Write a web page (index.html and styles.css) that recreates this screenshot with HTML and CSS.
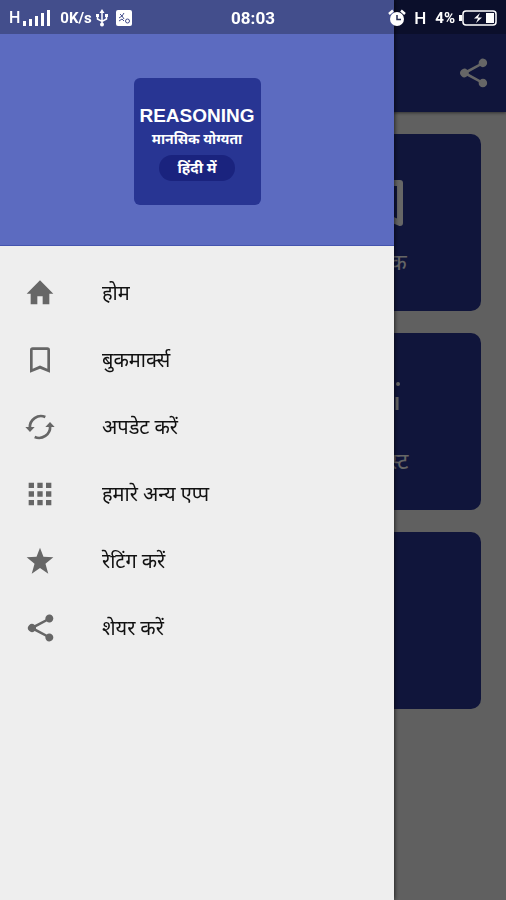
FILE: index.html
```html
<!DOCTYPE html>
<html lang="hi">
<head>
    <meta charset="UTF-8">
    <meta name="viewport" content="width=device-width, initial-scale=1">
    <title>Reasoning</title>
    <link rel="stylesheet" href="styles.css">
</head>
<body>
<main class="page">
    <header class="toolbar">
        <button type="button" class="icon-btn" aria-label="शेयर करें">
            <svg class="icon-share" viewBox="0 0 24 24"><path d="M19 16.100c-.8 0-1.500.3-2 .8l-8-4.400v-1l8-4.400A3 3 0 1 0 16 5v.7L8 9.800a3 3 0 1 0 0 4.400l8 4.100v.7a3 3 0 1 0 3-2.900z"/></svg>
        </button>
    </header>
    <div class="cards">
        <div class="card"></div>
        <div class="card">
            <svg class="card-icon" viewBox="0 0 64 60"><path d="M30 9h29v40l-14-6-15 6z" fill="none" stroke="currentColor" stroke-width="6" stroke-linejoin="round"/></svg>
            <span>मानसिक</span>
        </div>
        <div class="card"></div>
        <div class="card">
            <svg class="card-icon" viewBox="0 0 64 60"><path d="M10 12h36M56 24v13M10 34h36v16H10z" fill="none" stroke="currentColor" stroke-width="3"/><circle cx="57" cy="11" r="2"/></svg>
            <span>मॉक टेस्ट</span>
        </div>
        <div class="card"></div>
        <div class="card"></div>
    </div>
</main>
<div class="scrim"></div>

<aside class="drawer">
    <div class="drawer-header">
        <div class="logo">
            <strong class="logo-title">REASONING</strong>
            <span class="logo-sub">मानसिक योग्यता</span>
            <span class="logo-pill">हिंदी में</span>
        </div>
    </div>
    <nav class="menu">
        <a href="#" class="menu-item">
            <svg viewBox="0 0 24 24"><path d="M10 20.500v-6h4v6h5v-8h3L12 2.500 2 12.500h3v8z"/></svg>
            <span>होम</span>
        </a>
        <a href="#" class="menu-item">
            <svg viewBox="0 0 24 24"><path d="M17.500 2.500h-11a2 2 0 0 0-2 2v17l7.500-3 7.500 3v-17a2 2 0 0 0-2-2zm0 16L12 16.200l-5.500 2.300v-14h11z"/></svg>
            <span>बुकमार्क्स</span>
        </a>
        <a href="#" class="menu-item">
            <svg viewBox="0 0 24 24"><g fill="none" stroke="currentColor" stroke-width="2"><path d="M16 4.500A8.300 8.300 0 0 0 4.400 12.500"/><path d="M8 19.500A8.300 8.300 0 0 0 19.600 11.500"/></g><path d="M1 12h7l-3.500 3.800zM16 12h7l-3.500-3.800z"/></svg>
            <span>अपडेट करें</span>
        </a>
        <a href="#" class="menu-item">
            <svg viewBox="0 0 24 24"><path d="M3.500 3.500h4v4h-4zm6.500 0h4v4h-4zm6.500 0h4v4h-4zM3.500 10h4v4h-4zm6.500 0h4v4h-4zm6.500 0h4v4h-4zM3.500 16.500h4v4h-4zm6.500 0h4v4h-4zm6.500 0h4v4h-4z"/></svg>
            <span>हमारे अन्य एप्प</span>
        </a>
        <a href="#" class="menu-item">
            <svg viewBox="0 0 24 24"><path d="M12 17.300l6.200 4.200-2.100-7.500 5.900-4.800-7.400-.3L12 2 9.400 8.900 2 9.200 7.900 14l-2.100 7.500z"/></svg>
            <span>रेटिंग करें</span>
        </a>
        <a href="#" class="menu-item">
            <svg viewBox="0 0 24 24"><path d="M19 16.100c-.8 0-1.500.3-2 .8l-8-4.400v-1l8-4.400A3 3 0 1 0 16 5v.7L8 9.800a3 3 0 1 0 0 4.400l8 4.100v.7a3 3 0 1 0 3-2.900z"/></svg>
            <span>शेयर करें</span>
        </a>
    </nav>
</aside>

<div class="statusbar">
    <div class="status-left">
        <span class="sim">H</span>
        <svg class="signal" viewBox="0 0 28 16"><path d="M0 11h3v5H0zM6 9h3v7H6zM12 6h3v10h-3zM18 3h3v13h-3zM24 0h3v16h-3z"/></svg>
        <span class="speed">0K/s</span>
        <svg class="usb" viewBox="0 0 12 18"><path d="M6 2v13M1.500 6v4L6 12.500 10.500 10V6" fill="none" stroke="currentColor" stroke-width="1.500"/><path d="M6 0l2.500 4h-5zM0 5h3v3H0zM9 5h3v3H9z"/><circle cx="6" cy="15.500" r="2"/></svg>
        <svg class="app" viewBox="0 0 16 16"><rect width="16" height="16" rx="2"/><g fill="none" stroke="#434d8b"><path d="M3 8l3-2M4 4l2 2 2-3M3 11l3-2 2 2M6 6l2 3"/><circle cx="11.500" cy="11" r="2"/></g></svg>
    </div>
    <span class="clock">08:03</span>
    <div class="status-right">
        <svg class="alarm" viewBox="0 0 18 18"><circle cx="9" cy="10" r="7"/><path d="M1 5l4-3.500M17 5l-4-3.500" fill="none" stroke="currentColor" stroke-width="2.500"/><path d="M9 6v4.500h4" fill="none" stroke="#222a50" stroke-width="1.500"/></svg>
        <span class="net">H</span>
        <span class="percent">4%</span>
        <svg class="battery" viewBox="0 0 38 16"><rect x="4" y="1" width="33" height="14" rx="3" fill="none" stroke="currentColor" stroke-width="1.500"/><path d="M0 5h3v6H0zM27 3h8v10h-8zM21 3l-6 5.500h4L17 13l6-5.500h-4z"/></svg>
    </div>
</div>
</body>
</html>
```

FILE: styles.css
```css
* {
    box-sizing: border-box;
}

body {
    margin: 0;
    min-height: 100vh;
    background: #f0f0f0;
    font-family: Roboto, "Noto Sans", "Noto Sans Devanagari", sans-serif;
    overflow: hidden;
}

svg {
    display: block;
    flex: none;
    fill: currentColor;
}

.toolbar {
    display: flex;
    align-items: center;
    justify-content: flex-end;
    height: 112px;
    padding: 34px 16px 0;
    background: #283593;
    box-shadow: 0 1px 3px rgba(0, 0, 0, .5);
}

.icon-btn {
    padding: 0;
    border: 0;
    background: none;
    color: #fff;
}

.icon-share {
    width: 34px;
    height: 34px;
}

.cards {
    display: grid;
    grid-template-columns: 1fr 1fr;
    gap: 22px;
    padding: 22px 25px;
}

.card {
    display: flex;
    flex-direction: column;
    align-items: center;
    gap: 14px;
    height: 177px;
    padding-top: 40px;
    border-radius: 10px;
    background: #283593;
    color: #fff;
    font-size: 22px;
    line-height: 30px;
}

.card-icon {
    width: 64px;
    height: 60px;
}

.scrim {
    position: fixed;
    inset: 0;
    background: rgba(0, 0, 0, .6);
}

.drawer {
    position: fixed;
    top: 0;
    bottom: 0;
    left: 0;
    width: calc(100% - 112px);
    background: #eee;
    box-shadow: 0 0 5px rgba(0, 0, 0, .9);
}

.drawer-header {
    display: flex;
    justify-content: center;
    height: 246px;
    padding-top: 78px;
    background: #5c6bc0;
    border-bottom: 1px solid #4454ae;
}

.logo {
    display: flex;
    flex-direction: column;
    align-items: center;
    width: 127px;
    height: 127px;
    padding-top: 26px;
    border-radius: 6px;
    background: #283593;
    color: #fff;
    font-weight: bold;
}

.logo-title {
    font-family: "Liberation Sans", sans-serif;
    font-size: 19px;
    line-height: 24px;
}

.logo-sub {
    font-size: 14px;
    line-height: 22px;
}

.logo-pill {
    margin-top: 5px;
    padding: 0 18px;
    border-radius: 13px;
    background: #1a237e;
    font-size: 15px;
    line-height: 26px;
}

.menu {
    padding-top: 13px;
}

.menu-item {
    display: flex;
    align-items: center;
    gap: 46px;
    height: 67px;
    padding-left: 24px;
    color: #111;
    font-size: 20px;
    line-height: 30px;
    text-decoration: none;
}

.menu-item svg {
    width: 32px;
    height: 32px;
    color: #666;
}

.statusbar {
    position: fixed;
    top: 0;
    left: 0;
    right: 0;
    display: grid;
    grid-template-columns: 1fr auto 1fr;
    align-items: center;
    height: 34px;
    padding: 2px 9px 0 9px;
    background: rgba(0, 0, 0, .27);
    color: #fff;
    font-size: 17px;
    font-weight: bold;
    line-height: 20px;
}

.status-left,
.status-right {
    display: flex;
    align-items: center;
}

.status-right {
    justify-content: flex-end;
}

.sim {
    margin-right: 3px;
    font-size: 16px;
    font-weight: 500;
}

.signal {
    width: 28px;
    height: 16px;
    margin-right: 9px;
}

.speed {
    margin-right: 4px;
    font-size: 15px;
}

.usb {
    width: 12px;
    height: 18px;
    margin-right: 8px;
}

.app {
    width: 16px;
    height: 16px;
}

.alarm {
    width: 18px;
    height: 18px;
    margin-right: 8px;
}

.net {
    margin-right: 9px;
    font-weight: 500;
}

.percent {
    margin-right: 4px;
    font-size: 15px;
}

.battery {
    width: 38px;
    height: 16px;
}
```
